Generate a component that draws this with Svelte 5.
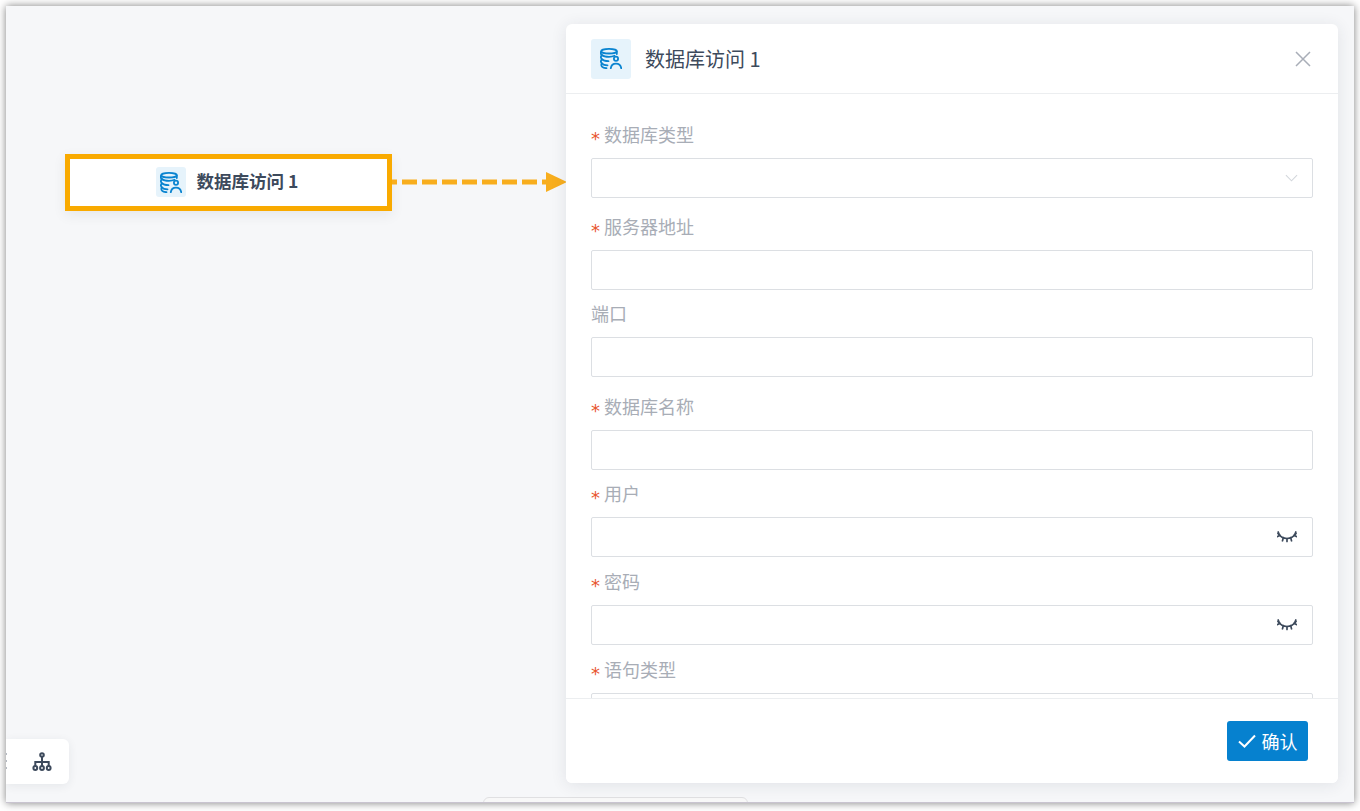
<script lang="ts">
	const fields = [
		{ label: '数据库类型', required: true, kind: 'select', gap: 'gap-5' },
		{ label: '服务器地址', required: true, kind: 'text', gap: '' },
		{ label: '端口', required: false, kind: 'text', gap: 'gap-6' },
		{ label: '数据库名称', required: true, kind: 'text', gap: '' },
		{ label: '用户', required: true, kind: 'secret', gap: 'gap-1' },
		{ label: '密码', required: true, kind: 'secret', gap: 'gap-1' },
		{ label: '语句类型', required: true, kind: 'text', gap: '' }
	];
</script>

{#snippet dbIcon()}
	<svg viewBox="0 0 22 21" fill="none" stroke="#0a84d0" stroke-width="1.800" stroke-linecap="round">
		<ellipse cx="9" cy="3.200" rx="7.800" ry="2.300" />
		<path d="M1.200 3.500C.5 5 .8 6.200 1.800 7c1.500 1.200 4 1.800 7.200 1.800 2 0 4-.3 5.500-1M16.800 3.500v2.500" />
		<path d="M1.800 7C.6 8.500.7 10 1.800 11.200 3 12.500 5.500 13.200 8.500 13.200" />
		<path d="M1.800 11.200C.6 12.700.7 14.200 1.800 15.400 3 16.700 5 17.300 7.500 17.300" />
		<path d="M1.800 15.400c-.8 1.500-.6 2.500.4 3.400 1 .9 2.500 1.300 4.300 1.400" />
		<circle cx="16" cy="10.800" r="2.100" />
		<path d="M10.800 20.200c.4-3 2.400-4.600 5.200-4.600s4.800 1.600 5.200 4.600" />
	</svg>
{/snippet}

{#snippet eye()}
	<svg class="eye" viewBox="0 0 20 12" fill="none" stroke="#3d4a5c" stroke-width="1.700" stroke-linecap="round">
		<path d="M1 2.500c2.500 3.500 5.500 5 9 5s6.500-1.500 9-5" />
		<path d="M.6 5.500 3 4.200M5.500 9.800l.8-3.200M10 10.500V7.500M14.500 9.800l-.8-3.200M19.400 5.500 17 4.200M18.800 1l-1 2.600M1.200 1l1 2.600" />
	</svg>
{/snippet}

<div class="frame">
	<div class="node">
		<span class="node-icon">{@render dbIcon()}</span>
		<span class="node-name">数据库访问 1</span>
	</div>

	<svg class="arrow" viewBox="0 0 175 24" fill="none">
		<path d="M0 12H155" stroke="#f8ae1e" stroke-width="5" stroke-dasharray="5 5 15 5 15 5 15 5 15 5 15 5 15 5 15 5" />
		<path d="M154 2v20l21-10z" fill="#f8ae1e" />
	</svg>

	<div class="toolbar">
		<span class="grip"></span>
		<svg viewBox="0 0 20 20" fill="none" stroke="#3d4a5c" stroke-width="2">
			<circle cx="10" cy="3" r="1.800" />
			<path d="M10 5v5M3.300 14v-4h13.400v4M10 10v4" />
			<circle cx="3.300" cy="16" r="1.900" />
			<circle cx="10" cy="16" r="1.900" />
			<circle cx="16.700" cy="16" r="1.900" />
		</svg>
	</div>

	<div class="tab"></div>

	<aside class="panel">
		<header class="panel-head">
			<span class="head-icon">{@render dbIcon()}</span>
			<h2>数据库访问 1</h2>
			<svg class="close" viewBox="0 0 16 16" fill="none" stroke="#a9aeb8" stroke-width="1.500">
				<path d="M1 1l14 14M15 1 1 15" />
			</svg>
		</header>

		<div class="panel-body">
			{#each fields as f}
				<div class="field {f.gap}">
					<div class="label" class:plain={!f.required}>
						{#if f.required}<i>*</i>{/if}{f.label}
					</div>
					<div class="input">
						{#if f.kind === 'select'}
							<svg class="chevron" viewBox="0 0 14 8" fill="none" stroke="#d3d7dc" stroke-width="1.200">
								<path d="M1 1l6 6 6-6" />
							</svg>
						{:else if f.kind === 'secret'}
							{@render eye()}
						{/if}
					</div>
				</div>
			{/each}
		</div>

		<footer class="panel-foot">
			<button>
				<svg viewBox="0 0 18 14" fill="none" stroke="#fff" stroke-width="2">
					<path d="M1 7.500l5.500 5L17 1.500" />
				</svg>
				确认
			</button>
		</footer>
	</aside>
</div>

<style>
	:global(body) {
		background: #fff;
		font-family: 'Noto Sans CJK SC', 'Liberation Sans', sans-serif;
	}

	.frame {
		position: relative;
		height: 797px;
		margin: 6px 6px 8px;
		background: #f6f7f9;
		box-shadow: 0 0 8px rgba(0, 0, 0, 0.5);
		border-bottom: 1px solid #c9c4d0;
		box-sizing: border-box;
		overflow: hidden;
	}

	.node {
		position: absolute;
		left: 59px;
		top: 148px;
		width: 327px;
		height: 57px;
		box-sizing: border-box;
		border: 5px solid #f9aa00;
		padding-right: 3px;
		background: #fff;
		box-shadow: 0 4px 12px rgba(40, 50, 70, 0.08);
		display: flex;
		align-items: center;
		justify-content: center;
		gap: 11px;
	}

	.node-icon {
		width: 30px;
		height: 30px;
		border-radius: 3px;
		background: #e6f3fb;
		display: flex;
		align-items: center;
		justify-content: center;
		margin-top: -1px;
	}

	.node-icon svg {
		width: 22px;
		height: 21px;
	}

	.node-name {
		font-size: 17.5px;
		font-weight: 700;
		color: #3d4a5c;
		margin-top: -4px;
	}

	.arrow {
		position: absolute;
		left: 386px;
		top: 164px;
		width: 175px;
		height: 24px;
	}

	.toolbar {
		position: absolute;
		left: 0;
		top: 733px;
		width: 63px;
		height: 45px;
		background: #fff;
		border-radius: 0 6px 6px 0;
		box-shadow: 0 2px 10px rgba(40, 50, 70, 0.08);
		display: flex;
		align-items: center;
		justify-content: center;
	}

	.toolbar svg {
		width: 20px;
		height: 20px;
		margin-left: 8px;
	}

	.grip {
		position: absolute;
		left: 0;
		top: 14px;
		width: 1px;
		height: 16px;
		background: repeating-linear-gradient(#b5bac2 0 2px, transparent 2px 7px);
	}

	.tab {
		position: absolute;
		left: 477px;
		top: 791px;
		width: 265px;
		height: 12px;
		box-sizing: border-box;
		background: #f8f8f8;
		border: 1px solid #e0e0e2;
		border-radius: 6px 6px 0 0;
	}

	.panel {
		position: absolute;
		left: 560px;
		top: 18px;
		width: 772px;
		height: 759px;
		background: #fff;
		border-radius: 6px;
		box-shadow: 0 2px 16px rgba(40, 50, 70, 0.1);
		display: flex;
		flex-direction: column;
		overflow: hidden;
	}

	.panel-head {
		height: 70px;
		flex: none;
		box-sizing: border-box;
		border-bottom: 1px solid #eceef0;
		padding: 0 27px 0 25px;
		display: flex;
		align-items: center;
	}

	.head-icon {
		width: 40px;
		height: 40px;
		border-radius: 3px;
		background: #e6f3fb;
		display: flex;
		align-items: center;
		justify-content: center;
	}

	.head-icon svg {
		width: 22px;
		height: 21px;
	}

	.panel-head h2 {
		flex: 1;
		margin: 0 0 0 14px;
		font-size: 20px;
		font-weight: 400;
		color: #3d4a5c;
	}

	.close {
		width: 16px;
		height: 16px;
	}

	.panel-body {
		flex: 1;
		min-height: 0;
		overflow: hidden;
		padding: 25px 25px 0;
	}

	.field {
		height: 87px;
	}

	.gap-1 {
		height: 88px;
	}

	.gap-5 {
		height: 92px;
	}

	.gap-6 {
		height: 93px;
	}

	.label {
		height: 39px;
		box-sizing: border-box;
		font-size: 18px;
		line-height: 30px;
		color: #a8adb6;
	}

	.label i {
		font-family: 'DejaVu Sans', sans-serif;
		font-size: 18px;
		line-height: 1;
		font-style: normal;
		color: #e8552e;
		display: inline-block;
		width: 13px;
		vertical-align: -3px;
	}

	.input {
		height: 40px;
		box-sizing: border-box;
		border: 1px solid #dcdfe3;
		border-radius: 2px;
		display: flex;
		align-items: center;
		justify-content: flex-end;
		padding-right: 15px;
		background: #fff;
	}

	.chevron {
		width: 13px;
		height: 8px;
		margin-right: -1px;
	}

	.eye {
		width: 20px;
		height: 12px;
	}

	.panel-foot {
		height: 85px;
		flex: none;
		box-sizing: border-box;
		border-top: 1px solid #eceef0;
		padding: 22px 30px 0 0;
		display: flex;
		justify-content: flex-end;
		align-items: flex-start;
		background: #fff;
	}

	.panel-foot button {
		width: 81px;
		height: 40px;
		border: none;
		border-radius: 3px;
		background: #0681cf;
		color: #fff;
		font: inherit;
		font-size: 18px;
		display: flex;
		align-items: center;
		justify-content: center;
		gap: 6px;
		padding: 0;
	}

	.panel-foot button svg {
		width: 18px;
		height: 14px;
	}
</style>
